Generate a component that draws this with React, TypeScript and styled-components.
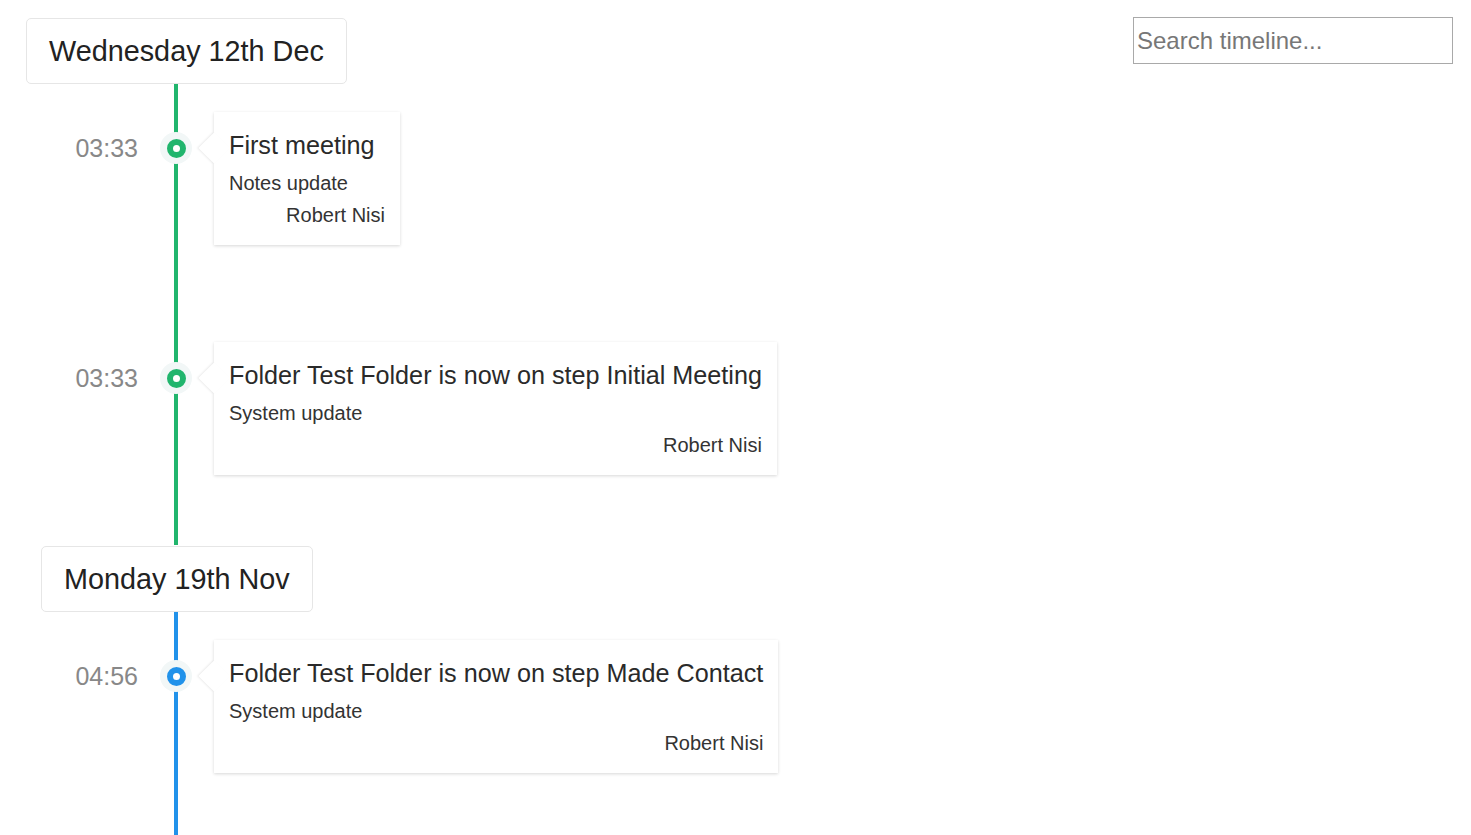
import React from "react";
import styled, { createGlobalStyle } from "styled-components";

const Global = createGlobalStyle`
  html, body { margin: 0; padding: 0; background: #fff; }
  body { font-family: "Liberation Sans", Arial, sans-serif; color: #333; }
  * { box-sizing: border-box; }
`;

const Page = styled.div`
  display: flex;
  justify-content: space-between;
  align-items: flex-start;
  padding: 17px 18px 0 0;
  min-height: 835px;
  overflow: hidden;
`;

const Timeline = styled.div`
  display: flex;
  flex-direction: column;
  width: 800px;
`;

const DateHeader = styled.div<{ $indent: number }>`
  align-self: flex-start;
  margin-left: ${(p) => p.$indent}px;
  margin-top: 1px;
  height: 66px;
  display: flex;
  align-items: center;
  padding: 0 22px;
  border: 1px solid #e6e6e6;
  border-radius: 5px;
  background: #fff;
  font-size: 28.8px;
  color: #222;
`;

const Item = styled.div<{ $color: string; $top: number; $bottom: number }>`
  display: grid;
  grid-template-columns: 138px 32px auto;
  column-gap: 22px;
  align-items: start;
  padding-top: ${(p) => p.$top}px;
  padding-bottom: ${(p) => p.$bottom}px;
  background: linear-gradient(${(p) => p.$color}, ${(p) => p.$color}) no-repeat 174px 0 / 4px 100%;
`;

const Time = styled.div`
  margin-top: 20px;
  line-height: 32px;
  font-size: 25px;
  color: #888;
  text-align: right;
`;

const Dot = styled.div<{ $color: string }>`
  margin-top: 20px;
  width: 32px;
  height: 32px;
  border-radius: 50%;
  background: #f2f7f7;
  display: flex;
  align-items: center;
  justify-content: center;
  &::after {
    content: "";
    width: 7px;
    height: 7px;
    border-radius: 50%;
    background: #fff;
    border: 6px solid ${(p) => p.$color};
    box-sizing: content-box;
  }
`;

const Card = styled.div`
  justify-self: start;
  position: relative;
  z-index: 0;
  min-width: 186px;
  background: #fff;
  padding: 15px 15px 15px;
  box-shadow: 0 1px 3px rgba(0, 0, 0, 0.16);
  display: flex;
  flex-direction: column;
  &::before {
    content: "";
    position: absolute;
    z-index: -1;
    left: -11px;
    top: 25px;
    width: 22px;
    height: 22px;
    background: #fff;
    transform: rotate(45deg);
    box-shadow: -1px 1px 2px rgba(0, 0, 0, 0.08);
  }
`;

const Title = styled.div`
  font-size: 25.2px;
  line-height: 36px;
  color: #2a2a2a;
  white-space: nowrap;
`;

const Sub = styled.div`
  margin-top: 5px;
  font-size: 20px;
  line-height: 30px;
  color: #333;
`;

const Author = styled.div`
  margin-top: 2px;
  font-size: 20px;
  line-height: 30px;
  color: #333;
  text-align: right;
`;

const Search = styled.input`
  width: 320px;
  height: 47px;
  border: 1px solid #a9a9a9;
  padding: 0 3px;
  font-family: "Liberation Sans", Arial, sans-serif;
  font-size: 24px;
  color: #333;
  outline: none;
  &::placeholder { color: #777; }
`;

const GREEN = "#21b56d";
const BLUE = "#2192ea";

type Entry = { time: string; title: string; sub: string; top: number; bottom: number };

const sections: { date: string; indent: number; color: string; items: Entry[] }[] = [
  {
    date: "Wednesday 12th Dec",
    indent: 26,
    color: GREEN,
    items: [
      { time: "03:33", title: "First meeting", sub: "Notes update", top: 28, bottom: 97 },
      { time: "03:33", title: "Folder Test Folder is now on step Initial Meeting", sub: "System update", top: 0, bottom: 70 },
    ],
  },
  {
    date: "Monday 19th Nov",
    indent: 41,
    color: BLUE,
    items: [
      { time: "04:56", title: "Folder Test Folder is now on step Made Contact", sub: "System update", top: 28, bottom: 80 },
    ],
  },
];

export default function App() {
  return (
    <>
      <Global />
      <Page>
        <Timeline>
          {sections.map((s) => (
            <React.Fragment key={s.date}>
              <DateHeader $indent={s.indent}>{s.date}</DateHeader>
              {s.items.map((it, i) => (
                <Item key={i} $color={s.color} $top={it.top} $bottom={it.bottom}>
                  <Time>{it.time}</Time>
                  <Dot $color={s.color} />
                  <Card>
                    <Title>{it.title}</Title>
                    <Sub>{it.sub}</Sub>
                    <Author>Robert Nisi</Author>
                  </Card>
                </Item>
              ))}
            </React.Fragment>
          ))}
        </Timeline>
        <Search placeholder="Search timeline..." />
      </Page>
    </>
  );
}
